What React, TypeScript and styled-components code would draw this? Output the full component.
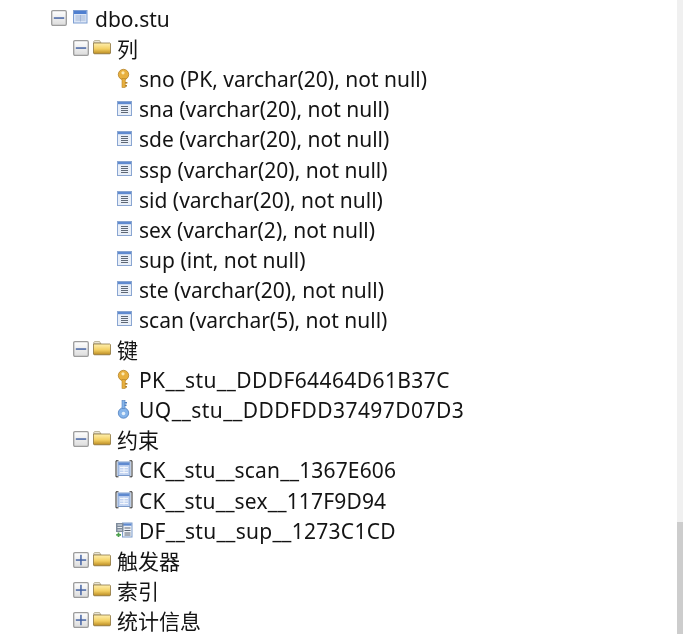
import React from 'react';
import styled, { createGlobalStyle } from 'styled-components';

const GlobalStyle = createGlobalStyle`
  html, body {
    margin: 0;
    padding: 0;
    background: #fff;
  }
`;

const Page = styled.div`
  width: 683px;
  height: 634px;
  padding-right: 1px;
  display: flex;
  overflow: hidden;
  background: #fff;
  font-family: "Noto Sans", "Noto Sans CJK SC", sans-serif;
  color: #141414;
`;

const Tree = styled.ul`
  flex: 1;
  margin: 0;
  padding: 3px 0 0;
  list-style: none;
  filter: blur(0.3px);
`;

const Row = styled.li<{ $left: number }>`
  height: 30.1px;
  display: flex;
  align-items: center;
  padding-left: ${(p) => p.$left}px;
  font-size: 21px;
  white-space: nowrap;
`;

const Slot = styled.span<{ $w: number }>`
  width: ${(p) => p.$w}px;
  flex-shrink: 0;
  display: flex;
  align-items: center;
`;

const Label = styled.span<{ $track?: number }>`
  padding-top: 2px;
  letter-spacing: ${(p) => p.$track ?? 0}px;
`;

const Scrollbar = styled.div`
  width: 6px;
  display: flex;
  flex-direction: column;
  background: #f0f0f0;
`;

const Track = styled.div`
  flex: 1;
`;

const Thumb = styled.div`
  height: 112px;
  background: #cdcdcd;
`;

const WideIcon = styled.svg`
  margin-left: -2px;
`;

const Expander = ({ open }: { open: boolean }) => (
  <svg width="16" height="16" viewBox="0 0 16 16">
    <defs>
      <linearGradient id="expFill" x1="0" y1="0" x2="0" y2="1">
        <stop offset="0" stopColor="#ffffff" />
        <stop offset="1" stopColor="#dcdcdc" />
      </linearGradient>
    </defs>
    <rect x="0.7" y="0.7" width="14.6" height="14.6" rx="1.2" fill="url(#expFill)" stroke="#9c9c9c" strokeWidth="1.3" />
    <rect x="2.8" y="7.3" width="10.4" height="1.5" fill="#4664a4" />
    {!open && <rect x="7.2" y="2.8" width="1.5" height="10.4" fill="#4664a4" />}
  </svg>
);

const TableIcon = () => (
  <svg width="15" height="17" viewBox="0 0 15 17">
    <rect x="0.5" y="0.5" width="13.5" height="12.5" fill="#dbe6f6" stroke="#7f9fd2" />
    <rect x="1" y="1" width="12.5" height="3" fill="#4f7fd0" />
    <path d="M2.5 6h10M2.5 8h10M2.5 10h10M7.5 5v6.5" stroke="#a3b6d6" fill="none" />
  </svg>
);

const FolderIcon = () => (
  <svg width="18" height="16" viewBox="0 0 18 16">
    <defs>
      <linearGradient id="folderFill" x1="0" y1="0" x2="0" y2="1">
        <stop offset="0" stopColor="#fff0b0" />
        <stop offset="0.55" stopColor="#f3cf62" />
        <stop offset="1" stopColor="#b98a22" />
      </linearGradient>
    </defs>
    <path d="M0.8 3V1.2L1.6 0.6h5L8 3z" fill="#eeeadb" stroke="#a89f80" strokeWidth="0.8" />
    <path d="M0.5 3h16.4l0.6 0.6v9.6l-0.6 0.6H1.1l-0.6-0.6z" fill="url(#folderFill)" stroke="#7c6630" strokeWidth="0.7" />
  </svg>
);

const KeyIcon = ({ blue }: { blue?: boolean }) => {
  const main = blue ? '#85b4ea' : '#e8b03e';
  const edge = blue ? '#4f7fbf' : '#b5842a';
  return (
    <svg width="14" height="21" viewBox="0 0 14 21">
      <circle cx="6.5" cy={blue ? 14 : 6.5} r="5.2" fill={main} stroke={edge} strokeWidth="0.8" />
      {blue ? (
        <>
          <rect x="5" y="1.5" width="3" height="8" fill={main} stroke={edge} strokeWidth="0.6" />
          <rect x="7.5" y="3" width="2.5" height="1.5" fill={edge} />
          <rect x="7.5" y="5.5" width="2" height="1.5" fill={edge} />
          <circle cx="6.5" cy="14.5" r="1.8" fill="#e3effb" />
        </>
      ) : (
        <>
          <rect x="5" y="10.5" width="3.2" height="9" fill={main} stroke={edge} strokeWidth="0.6" />
          <rect x="8" y="14" width="2.4" height="1.6" fill={edge} />
          <rect x="8" y="17" width="2" height="1.6" fill={edge} />
          <circle cx="6" cy="4.8" r="1.6" fill="#fdeab0" />
        </>
      )}
    </svg>
  );
};

const ColumnIcon = () => (
  <svg width="15" height="15" viewBox="0 0 15 15">
    <rect x="0.5" y="0.5" width="14" height="14" fill="#e9eff8" stroke="#8aa6d2" />
    <rect x="1" y="1" width="13" height="2.2" fill="#5f8ad0" />
    <path d="M4 5.5h7M4 7.5h7M4 9.5h7M4 11.5h7" stroke="#5e6876" fill="none" />
  </svg>
);

const CheckIcon = () => (
  <WideIcon width="18" height="18" viewBox="0 0 18 18">
    <path d="M3.5 0.8H1v16h2.5M14.5 0.8H17v16h-2.5" stroke="#2c2c2c" strokeWidth="1" fill="none" />
    <rect x="3" y="2" width="12" height="13.5" fill="#c3d4f1" stroke="#7d9ccb" />
    <rect x="3.5" y="2.5" width="11" height="2.6" fill="#5f8ad0" />
    <path d="M5 7.5h8M5 10h8M5 12.5h8M9 6.5v7" stroke="#f4f7fc" fill="none" />
  </WideIcon>
);

const DefaultIcon = () => (
  <WideIcon width="18" height="16" viewBox="0 0 18 16">
    <rect x="7.5" y="1" width="9.5" height="14" fill="#eef2f8" stroke="#7d9ccb" />
    <rect x="8" y="1.5" width="8.5" height="2.2" fill="#5f8ad0" />
    <path d="M9.5 6h6M9.5 8.5h6M9.5 11h6M9.5 13h6" stroke="#5a6472" fill="none" />
    <rect x="1" y="1" width="7.5" height="9" fill="#7f8c9c" />
    <path d="M2.5 3h4.5M2.5 5.5h4.5M2.5 8h4.5" stroke="#e9edf2" fill="none" />
    <path d="M3.5 10.5v4.5M1.2 12.8h4.8" stroke="#4ea24e" strokeWidth="1.7" fill="none" />
  </WideIcon>
);

type Icon = 'key' | 'ukey' | 'col' | 'check' | 'def';

const leafIcons: Record<Icon, React.ReactNode> = {
  key: <KeyIcon />,
  ukey: <KeyIcon blue />,
  col: <ColumnIcon />,
  check: <CheckIcon />,
  def: <DefaultIcon />,
};

const Branch = ({ label, open, table }: { label: string; open: boolean; table?: boolean }) => (
  <Row $left={table ? 51 : 73}>
    <Slot $w={table ? 22 : 20}>
      <Expander open={open} />
    </Slot>
    <Slot $w={table ? 22 : 24}>{table ? <TableIcon /> : <FolderIcon />}</Slot>
    {table ? <Label>{label}</Label> : label}
  </Row>
);

const Leaf = ({ icon, label, track }: { icon: Icon; label: string; track?: number }) => (
  <Row $left={117}>
    <Slot $w={22}>{leafIcons[icon]}</Slot>
    <Label $track={track}>{label}</Label>
  </Row>
);

const columns = [
  'sna (varchar(20), not null)',
  'sde (varchar(20), not null)',
  'ssp (varchar(20), not null)',
  'sid (varchar(20), not null)',
  'sex (varchar(2), not null)',
  'sup (int, not null)',
  'ste (varchar(20), not null)',
  'scan (varchar(5), not null)',
];

export default function App() {
  return (
    <Page>
      <GlobalStyle />
      <Tree>
        <Branch table open label="dbo.stu" />
        <Branch open label="列" />
        <Leaf icon="key" label="sno (PK, varchar(20), not null)" />
        {columns.map((c) => (
          <Leaf key={c} icon="col" label={c} />
        ))}
        <Branch open label="键" />
        <Leaf icon="key" label="PK__stu__DDDF64464D61B37C" track={0.4} />
        <Leaf icon="ukey" label="UQ__stu__DDDFDD37497D07D3" track={0.45} />
        <Branch open label="约束" />
        <Leaf icon="check" label="CK__stu__scan__1367E606" track={0.16} />
        <Leaf icon="check" label="CK__stu__sex__117F9D94" track={0.16} />
        <Leaf icon="def" label="DF__stu__sup__1273C1CD" track={0.28} />
        <Branch open={false} label="触发器" />
        <Branch open={false} label="索引" />
        <Branch open={false} label="统计信息" />
      </Tree>
      <Scrollbar>
        <Track />
        <Thumb />
      </Scrollbar>
    </Page>
  );
}
